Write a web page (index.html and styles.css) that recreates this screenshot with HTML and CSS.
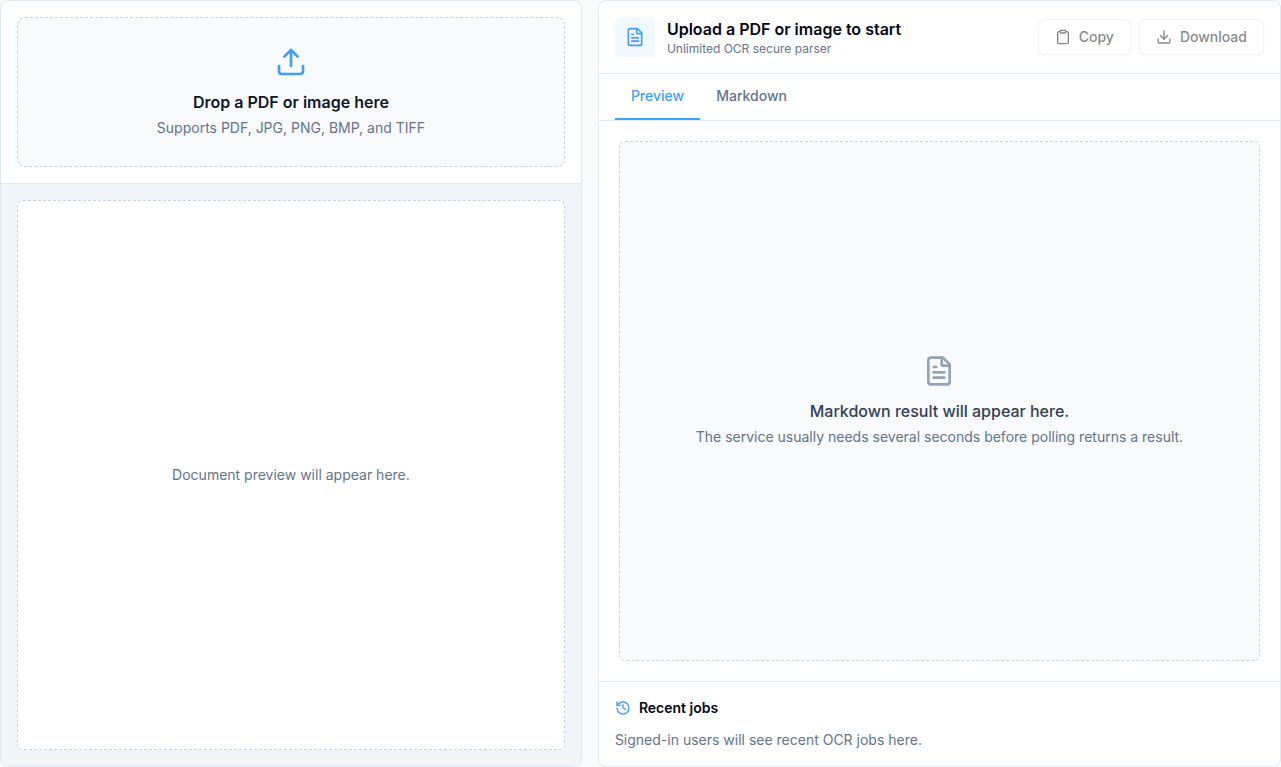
FILE: index.html
```html
<!DOCTYPE html>
<html lang="en">
<head>
    <meta charset="UTF-8">
    <meta name="viewport" content="width=device-width, initial-scale=1">
    <title>Unlimited OCR</title>
    <link rel="stylesheet" href="styles.css">
</head>
<body>
    <main class="workspace">
        <!-- upload + document preview -->
        <section class="card">
            <div class="upload">
                <label class="dropzone" for="file">
                    <svg class="icon icon-lg" viewBox="0 0 24 24"><path d="M12 3v12"/><path d="m17 8-5-5-5 5"/><path d="M21 15v4a2 2 0 0 1-2 2H5a2 2 0 0 1-2-2v-4"/></svg>
                    <span class="dropzone-title">Drop a PDF or image here</span>
                    <span class="hint">Supports PDF, JPG, PNG, BMP, and TIFF</span>
                    <input class="file-input" type="file" id="file" accept=".pdf,.jpg,.jpeg,.png,.bmp,.tif,.tiff">
                </label>
            </div>
            <div class="document">
                <div class="document-empty">Document preview will appear here.</div>
            </div>
        </section>

        <!-- parse result -->
        <section class="card">
            <header class="result-header">
                <div class="file-icon">
                    <svg class="icon icon-md" viewBox="0 0 24 24"><path d="M6 22a2 2 0 0 1-2-2V4a2 2 0 0 1 2-2h8a2.4 2.4 0 0 1 1.704.706l3.588 3.588A2.4 2.4 0 0 1 20 8v12a2 2 0 0 1-2 2z"/><path d="M14 2v5a1 1 0 0 0 1 1h5"/><path d="M10 9H8"/><path d="M16 13H8"/><path d="M16 17H8"/></svg>
                </div>
                <div class="result-info">
                    <h2 class="result-title">Upload a PDF or image to start</h2>
                    <p class="result-sub">Unlimited OCR secure parser</p>
                </div>
                <div class="actions">
                    <button class="btn" type="button" disabled>
                        <svg class="icon icon-sm" viewBox="0 0 24 24"><rect width="8" height="4" x="8" y="2" rx="1" ry="1"/><path d="M16 4h2a2 2 0 0 1 2 2v14a2 2 0 0 1-2 2H6a2 2 0 0 1-2-2V6a2 2 0 0 1 2-2h2"/></svg>
                        Copy
                    </button>
                    <button class="btn" type="button" disabled>
                        <svg class="icon icon-sm" viewBox="0 0 24 24"><path d="M12 15V3"/><path d="M21 15v4a2 2 0 0 1-2 2H5a2 2 0 0 1-2-2v-4"/><path d="m7 10 5 5 5-5"/></svg>
                        Download
                    </button>
                </div>
            </header>
            <div class="tabs" role="tablist">
                <button class="tab active" type="button" role="tab" aria-selected="true">Preview</button>
                <button class="tab" type="button" role="tab" aria-selected="false">Markdown</button>
            </div>
            <div class="result">
                <div class="result-empty">
                    <svg class="icon icon-lg" viewBox="0 0 24 24"><path d="M6 22a2 2 0 0 1-2-2V4a2 2 0 0 1 2-2h8a2.4 2.4 0 0 1 1.704.706l3.588 3.588A2.4 2.4 0 0 1 20 8v12a2 2 0 0 1-2 2z"/><path d="M14 2v5a1 1 0 0 0 1 1h5"/><path d="M10 9H8"/><path d="M16 13H8"/><path d="M16 17H8"/></svg>
                    <p class="empty-title">Markdown result will appear here.</p>
                    <p class="hint">The service usually needs several seconds before polling returns a result.</p>
                </div>
            </div>
            <footer class="jobs">
                <h3 class="jobs-title">
                    <svg class="icon icon-sm" viewBox="0 0 24 24"><path d="M3 12a9 9 0 1 0 9-9 9.75 9.75 0 0 0-6.74 2.74L3 8"/><path d="M3 3v5h5"/><path d="M12 7v5l4 2"/></svg>
                    Recent jobs
                </h3>
                <p class="jobs-text">Signed-in users will see recent OCR jobs here.</p>
            </footer>
        </section>
    </main>
</body>
</html>
```
FILE: styles.css
```css
* {
    box-sizing: border-box;
}
body {
    margin: 0;
    background: #f8fafc;
    color: #020617;
    font-family: Inter, "Liberation Sans", sans-serif;
    font-size: 14px;
    line-height: 20px;
}
h2, h3, p {
    margin: 0;
}
button {
    font: inherit;
}
.workspace {
    display: grid;
    grid-template-columns: 46fr 54fr;
    gap: 16px;
    min-height: 100vh;
}
.card {
    display: flex;
    flex-direction: column;
    min-width: 0;
    overflow: hidden;
    background: #fff;
    border: 1px solid #e2e8f0;
    border-radius: 8px;
}

/* icons */
.icon {
    flex-shrink: 0;
    fill: none;
    stroke: currentColor;
    stroke-width: 2;
    stroke-linecap: round;
    stroke-linejoin: round;
}
.icon-sm {
    width: 16px;
    height: 16px;
}
.icon-md {
    width: 20px;
    height: 20px;
}
.icon-lg {
    width: 32px;
    height: 32px;
}

/* upload */
.upload {
    padding: 16px;
    border-bottom: 1px solid #e2e8f0;
}
.dropzone {
    display: flex;
    flex-direction: column;
    align-items: center;
    padding: 28px 16px;
    background: #f8fafc;
    border: 1px dashed #cbd5e1;
    border-radius: 8px;
    text-align: center;
    cursor: pointer;
}
.dropzone .icon {
    color: #409eff;
}
.dropzone-title {
    margin-top: 12px;
    color: #0f172a;
    font-size: 16px;
    font-weight: 600;
    line-height: 24px;
}
.hint {
    margin-top: 4px;
    color: #64748b;
}
.file-input {
    display: none;
}
.document {
    display: flex;
    flex: 1;
    padding: 16px;
    background: #f1f5f9;
}
.document-empty {
    display: flex;
    flex: 1;
    align-items: center;
    justify-content: center;
    background: #fff;
    border: 1px dashed #cbd5e1;
    border-radius: 6px;
    color: #64748b;
}

/* result */
.result-header {
    display: flex;
    align-items: center;
    gap: 12px;
    padding: 16px;
    border-bottom: 1px solid #e2e8f0;
}
.file-icon {
    display: flex;
    align-items: center;
    justify-content: center;
    width: 40px;
    height: 40px;
    background: #f0f9ff;
    border-radius: 6px;
    color: #409eff;
}
.result-info {
    flex: 1;
    min-width: 0;
}
.result-title {
    font-size: 16px;
    font-weight: 600;
    line-height: 24px;
}
.result-sub {
    color: #64748b;
    font-size: 12px;
    line-height: 16px;
}
.actions {
    display: flex;
    gap: 8px;
}
.btn {
    display: flex;
    align-items: center;
    gap: 8px;
    height: 36px;
    padding: 0 16px;
    background: #fff;
    border: 1px solid #e4e4ee;
    border-radius: 6px;
    box-shadow: 0 1px 2px rgba(0, 0, 0, 0.05);
    color: #0f0f1c;
    font-weight: 500;
}
.btn:disabled {
    opacity: 0.5;
}
.tabs {
    display: flex;
    padding: 0 16px;
    border-bottom: 1px solid #e2e8f0;
}
.tab {
    padding: 12px 16px;
    background: none;
    border: 0;
    border-bottom: 2px solid transparent;
    color: #64748b;
    font-weight: 500;
    cursor: pointer;
}
.tab.active {
    border-color: #409eff;
    color: #409eff;
}
.result {
    display: flex;
    flex: 1;
    padding: 20px;
}
.result-empty {
    display: flex;
    flex: 1;
    flex-direction: column;
    align-items: center;
    justify-content: center;
    background: #f8fafc;
    border: 1px dashed #cbd5e1;
    border-radius: 6px;
    text-align: center;
}
.result-empty .icon {
    color: #94a3b8;
}
.empty-title {
    margin-top: 12px;
    color: #334155;
    font-size: 16px;
    font-weight: 500;
    line-height: 24px;
}

/* recent jobs */
.jobs {
    padding: 16px;
    border-top: 1px solid #e2e8f0;
}
.jobs-title {
    display: flex;
    align-items: center;
    gap: 8px;
    font-size: 14px;
    font-weight: 600;
}
.jobs-title .icon {
    color: #409eff;
}
.jobs-text {
    margin-top: 12px;
    color: #64748b;
}
```
